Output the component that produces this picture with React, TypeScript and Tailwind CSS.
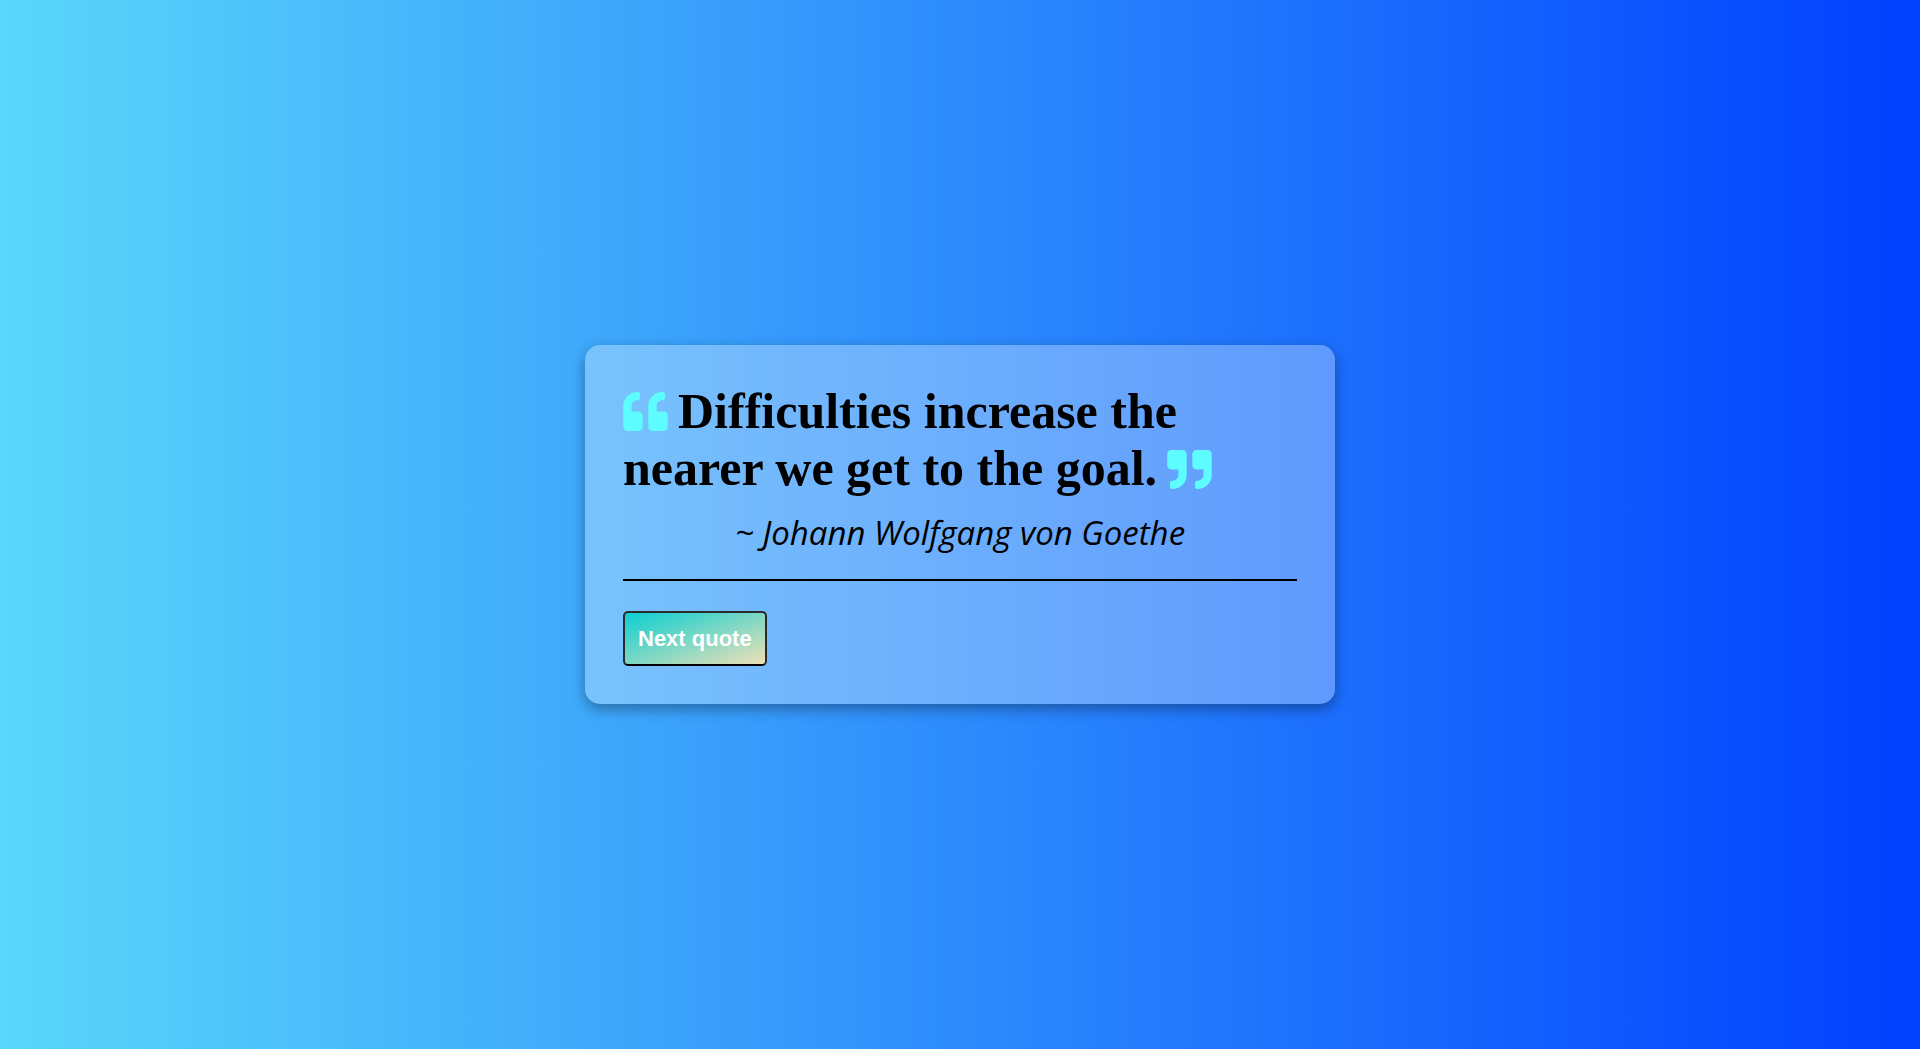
function QuoteLeft({ className }: { className?: string }) {
  return (
    <svg viewBox="0 32 512 448" className={className} fill="#5cfcff" aria-hidden="true">
      <path d="M464 256h-80v-64c0-35.3 28.7-64 64-64h8c13.3 0 24-10.7 24-24V56c0-13.3-10.7-24-24-24h-8c-88.4 0-160 71.6-160 160v240c0 26.5 21.5 48 48 48h128c26.5 0 48-21.5 48-48V304c0-26.5-21.5-48-48-48zm-288 0H96v-64c0-35.3 28.7-64 64-64h8c13.3 0 24-10.7 24-24V56c0-13.3-10.7-24-24-24h-8C71.6 32 0 103.6 0 192v240c0 26.5 21.5 48 48 48h128c26.5 0 48-21.5 48-48V304c0-26.5-21.5-48-48-48z" />
    </svg>
  );
}

function QuoteRight({ className }: { className?: string }) {
  return (
    <svg viewBox="0 32 512 448" className={className} fill="#5cfcff" aria-hidden="true">
      <path d="M464 32H336c-26.5 0-48 21.5-48 48v128c0 26.5 21.5 48 48 48h80v64c0 35.3-28.7 64-64 64h-8c-13.3 0-24 10.7-24 24v48c0 13.3 10.7 24 24 24h8c88.4 0 160-71.6 160-160V80c0-26.5-21.5-48-48-48zm-288 0H48C21.5 32 0 53.5 0 80v128c0 26.5 21.5 48 48 48h80v64c0 35.3-28.7 64-64 64h-8c-13.3 0-24 10.7-24 24v48c0 13.3 10.7 24 24 24h8c88.4 0 160-71.6 160-160V80c0-26.5-21.5-48-48-48z" />
    </svg>
  );
}

export default function App() {
  return (
    <div className="min-h-screen w-full flex items-center justify-center bg-[linear-gradient(to_right,#5ad7fa,#0040ff)]">
      {/* quote card */}
      <div className="w-[750px] rounded-[15px] bg-white/30 p-[38px] shadow-[0_5px_14px_rgba(0,0,0,0.35)]">
        <p className="font-['Liberation_Serif','Times_New_Roman',serif] text-[50px] font-bold leading-[57px] text-black">
          <QuoteLeft className="mr-[10px] inline-block h-[39px] w-[45px] align-[-3px]" />
          Difficulties increase the nearer we get to the goal.
          <QuoteRight className="ml-[10px] inline-block h-[39px] w-[45px] align-[-4px]" />
        </p>

        <div className="mt-[16px] text-center font-['Comic_Sans_MS','Open_Sans',sans-serif] text-[33px] italic leading-[40px] text-black">
          ~ Johann Wolfgang von Goethe
        </div>

        <hr className="mt-[26px] border-0 border-t-2 border-black" />

        <button className="mt-[30px] rounded-[5px] border-2 border-[#2b2b2b] border-b-black bg-[linear-gradient(to_bottom_right,#0bcfd2,#eee0b6)] px-[13px] py-[12px] font-['Liberation_Sans',Arial,sans-serif] text-[22px] font-bold leading-[27px] text-white">
          Next quote
        </button>
      </div>
    </div>
  );
}
